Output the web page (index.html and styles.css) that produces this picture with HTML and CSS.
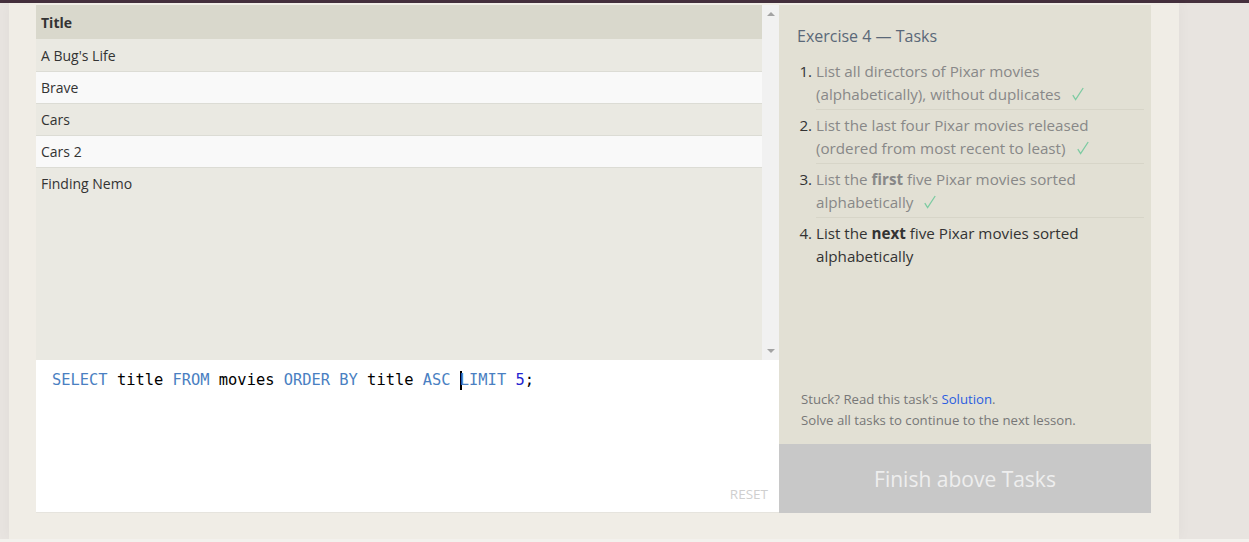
FILE: index.html
```html
<!DOCTYPE html>
<html>
<head>
<meta charset="utf-8">
<link rel="stylesheet" href="styles.css">
</head>
<body>
<div class="topbar"></div>
<div class="page">
  <div class="exercise">
    <div class="left">
      <div class="results">
        <div class="table-wrap">
          <table class="table">
            <thead><tr><th>Title</th></tr></thead>
            <tbody>
              <tr><td>A Bug's Life</td></tr>
              <tr><td>Brave</td></tr>
              <tr><td>Cars</td></tr>
              <tr><td>Cars 2</td></tr>
              <tr><td>Finding Nemo</td></tr>
            </tbody>
          </table>
        </div>
        <div class="scrollbar">
          <span class="arrow up"></span>
          <span class="arrow down"></span>
        </div>
      </div>
      <div class="editor">
        <div class="code"><span class="kw">SELECT</span> title <span class="kw">FROM</span> movies <span class="kw">ORDER BY</span> title <span class="kw">ASC</span> <span class="cursor"></span><span class="kw">LIMIT</span> <span class="num">5</span>;</div>
        <div class="reset">RESET</div>
      </div>
    </div>
    <div class="right">
      <div class="tasks">
        <h2 class="heading">Exercise 4 — Tasks</h2>
        <ol class="task-list">
          <li class="done"><span class="t">List all directors of Pixar movies (alphabetically), without duplicates</span><svg class="check" width="12" height="14" viewBox="0 0 12 14"><polyline points="0.8,8.2 3.6,12.6 11.2,1" fill="none" stroke="#7dcba2" stroke-width="1.3"/></svg></li>
          <li class="done"><span class="t">List the last four Pixar movies released (ordered from most recent to least)</span><svg class="check" width="12" height="14" viewBox="0 0 12 14"><polyline points="0.8,8.2 3.6,12.6 11.2,1" fill="none" stroke="#7dcba2" stroke-width="1.3"/></svg></li>
          <li class="done"><span class="t">List the <b>first</b> five Pixar movies sorted alphabetically</span><svg class="check" width="12" height="14" viewBox="0 0 12 14"><polyline points="0.8,8.2 3.6,12.6 11.2,1" fill="none" stroke="#7dcba2" stroke-width="1.3"/></svg></li>
          <li><span class="t">List the <b>next</b> five Pixar movies sorted alphabetically</span></li>
        </ol>
        <div class="help">
          <p>Stuck? Read this task's <a class="link" href="#">Solution</a>.</p>
          <p>Solve all tasks to continue to the next lesson.</p>
        </div>
      </div>
      <div class="finish">Finish above Tasks</div>
    </div>
  </div>
</div>
<div class="footer"></div>
</body>
</html>
```
FILE: styles.css
```css
* { box-sizing: border-box; }
html, body { margin: 0; padding: 0; }
body {
  background: #e8e4e0;
  font-family: "Open Sans", "Noto Sans", sans-serif;
  height: 542px;
  overflow: hidden;
}
.topbar { height: 3px; background: #45303d; }
.page {
  margin-left: 9px;
  width: 1170px;
  height: 536px;
  background: #f0ede6;
  padding: 2px 28px 0 27px;
  box-shadow: 0 0 14px rgba(0,0,0,0.04);
}
.footer { height: 3px; background: #f3f1ed; }
.exercise { display: flex; height: 508px; }
.left { width: 743px; display: flex; flex-direction: column; }
.results { height: 355px; display: flex; }
.table-wrap { flex: 1; background: #eae9e2; }
.table { width: 100%; border-collapse: collapse; font-size: 14px; color: #333; }
.table th {
  text-align: left; font-weight: 700; background: #d9d8cc;
  height: 34px; padding: 1px 5px 0;
}
.table td { height: 32px; padding: 1px 5px 0; border-bottom: 1px solid #dcdcd5; }
.table tbody tr:last-child td { border-bottom: 0; }
.table tbody tr:nth-child(even) td { background: #f9f9f9; }
.scrollbar {
  width: 17px; background: #f1f1f1;
  display: flex; flex-direction: column; justify-content: space-between; align-items: center;
  padding: 7px 0 7px;
}
.arrow { width: 0; height: 0; border-left: 4px solid transparent; border-right: 4px solid transparent; }
.arrow.up { border-bottom: 4px solid #a3a3a3; }
.arrow.down { border-top: 4px solid #a3a3a3; }
.editor {
  flex: 1; background: #fff; border-bottom: 1px solid #e6e4de;
  display: flex; flex-direction: column; justify-content: space-between;
  padding: 11px 11px 9px 16px;
}
.code {
  font-family: "DejaVu Sans Mono", "Liberation Mono", monospace;
  font-size: 15.4px; line-height: 19px; color: #000; white-space: pre;
}
.kw { color: #4a7fc2; }
.num { color: #2323d0; }
.cursor { display: inline-block; width: 2px; height: 19px; background: #000; vertical-align: top; margin-right: -2px; }
.reset { align-self: flex-end; font-size: 13.5px; color: #cfcfcf; }
.right { width: 372px; display: flex; flex-direction: column; }
.tasks {
  flex: 1; background: #e2e0d4; padding: 19px 7px 0 18px;
  display: flex; flex-direction: column;
}
.heading { margin: 0; font-size: 16px; font-weight: 400; color: #5a6878; line-height: 24px; }
.task-list { margin: 8px 0 0; padding-left: 19px; font-size: 15.2px; line-height: 23px; color: #333; }
.task-list li { padding: 4px 0 3px; }
.task-list li:not(:last-child) { border-bottom: 1px solid #d7d5c8; }
.task-list li.done .t { color: #888; }
.task-list b { font-weight: 700; }
.check { margin-left: 11px; vertical-align: -1px; }
.help { margin-top: auto; padding: 0 0 13px 4px; font-size: 13.2px; line-height: 21px; color: #777; }
.help p { margin: 0; }
.link { color: #2a5de0; text-decoration: none; }
.finish {
  height: 69px; background: #c8c8c8; color: #eeeeee;
  font-size: 21px; display: flex; align-items: center; justify-content: center;
}
```
